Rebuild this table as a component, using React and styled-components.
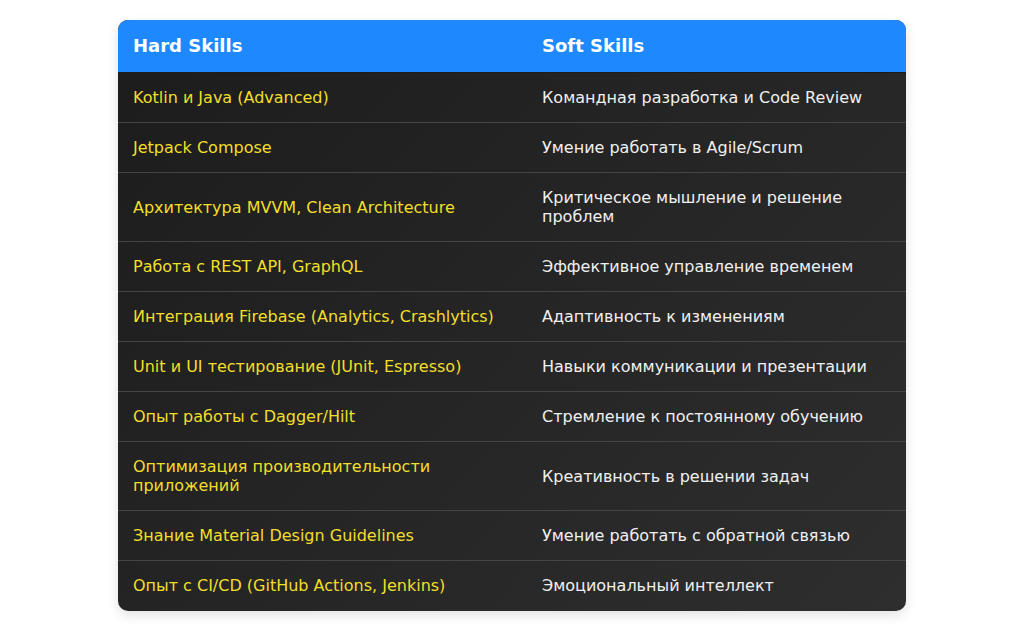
import styled, { createGlobalStyle } from 'styled-components'

const GlobalStyle = createGlobalStyle`
  body {
    margin: 0;
    background: #ffffff;
    font-family: 'DejaVu Sans', sans-serif;
  }
`

const skills = [
  ['Kotlin и Java (Advanced)', 'Командная разработка и Code Review'],
  ['Jetpack Compose', 'Умение работать в Agile/Scrum'],
  ['Архитектура MVVM, Clean Architecture', 'Критическое мышление и решение проблем'],
  ['Работа с REST API, GraphQL', 'Эффективное управление временем'],
  ['Интеграция Firebase (Analytics, Crashlytics)', 'Адаптивность к изменениям'],
  ['Unit и UI тестирование (JUnit, Espresso)', 'Навыки коммуникации и презентации'],
  ['Опыт работы с Dagger/Hilt', 'Стремление к постоянному обучению'],
  ['Оптимизация производительности приложений', 'Креативность в решении задач'],
  ['Знание Material Design Guidelines', 'Умение работать с обратной связью'],
  ['Опыт с CI/CD (GitHub Actions, Jenkins)', 'Эмоциональный интеллект'],
]

const Page = styled.div`
  padding: 20px 118px;
`

const Table = styled.table`
  width: 100%;
  border-collapse: separate;
  border-spacing: 0;
  border-radius: 10px;
  overflow: hidden;
  background: linear-gradient(135deg, #1c1c1c 0%, #2e2e2e 100%);
  box-shadow: 0 4px 12px rgba(0, 0, 0, 0.12);
  table-layout: fixed;
`

const Head = styled.th`
  background: #1e88ff;
  color: #ffffff;
  font-size: 18px;
  font-weight: bold;
  text-align: left;
  padding: 15px;
  line-height: 22px;
  border-bottom: 1px solid #1c1c1c;
  width: ${(p) => p.$w || 'auto'};
`

const Cell = styled.td`
  padding: 15px;
  font-size: 16px;
  line-height: 19px;
  color: ${(p) => (p.$hard ? '#f2df2a' : '#f0f0f0')};
  border-bottom: 1px solid ${(p) => (p.$last ? 'transparent' : '#454545')};
  vertical-align: middle;
`

export default function App() {
  return (
    <>
      <GlobalStyle />
      <Page>
        <Table>
          <thead>
            <tr>
              <Head $w="379px">Hard Skills</Head>
              <Head>Soft Skills</Head>
            </tr>
          </thead>
          <tbody>
            {skills.map(([hard, soft], i) => (
              <tr key={i}>
                <Cell $hard $last={i === skills.length - 1}>{hard}</Cell>
                <Cell $last={i === skills.length - 1}>{soft}</Cell>
              </tr>
            ))}
          </tbody>
        </Table>
      </Page>
    </>
  )
}
